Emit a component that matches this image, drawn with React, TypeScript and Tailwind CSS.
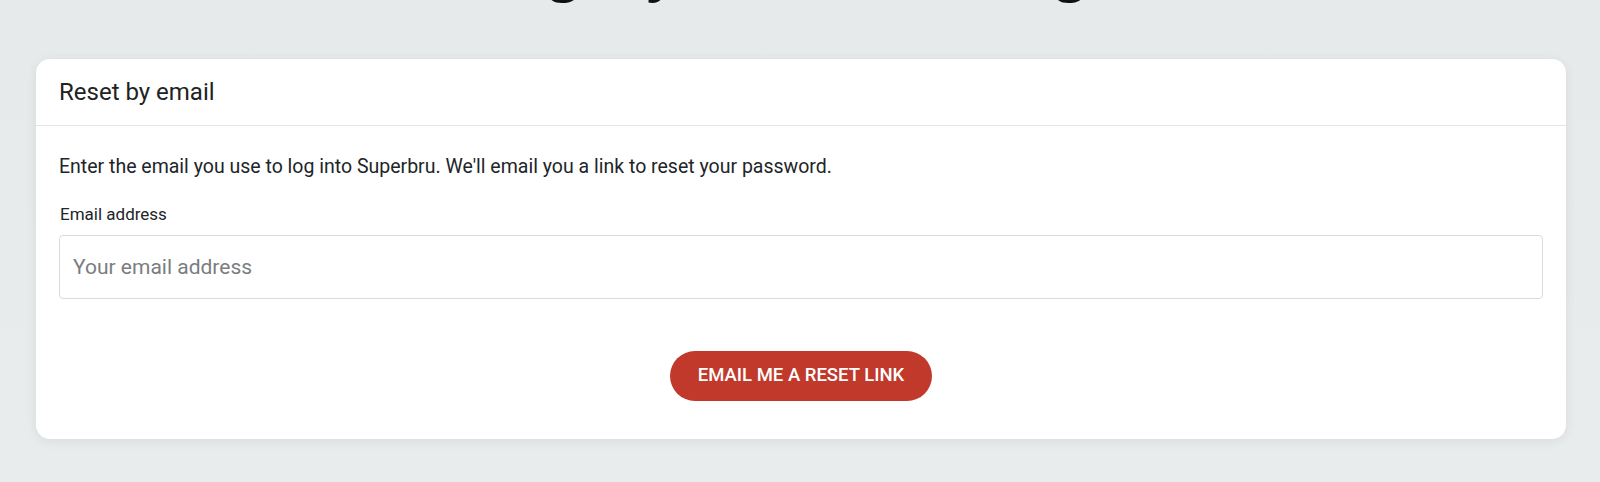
export default function App() {
  return (
    <div
      className="min-h-screen overflow-hidden bg-gradient-to-b from-[#e6eaeb] to-[#e9ecec] text-[#212529]"
      style={{ fontFamily: 'Roboto, "Liberation Sans", Arial, sans-serif' }}
    >
      <h1
        className="-mt-[56px] h-[52px] text-center text-[52px] font-bold leading-[52px] text-[#111]"
        style={{ fontFamily: '"Open Sans", Arial, sans-serif' }}
      >
        Forgot your email or login
      </h1>

      <div className="ml-[36px] mr-[34px] mt-[63px] rounded-[14px] bg-white shadow-[0_2px_12px_rgba(0,0,0,0.07)]">
        <div className="flex h-[67px] items-center border-b border-[#e3e5e6] px-[23px]">
          <h2 className="text-[24px] leading-[28px] text-[#222]">Reset by email</h2>
        </div>

        <div className="px-[23px] pb-[38px] pt-[29px]">
          <p className="text-[19.5px] leading-[24px]">
            Enter the email you use to log into Superbru. We'll email you a link to reset your password.
          </p>

          <label className="mt-[25px] block pl-[1px] text-[17px] leading-[20px]">Email address</label>
          <input
            type="email"
            placeholder="Your email address"
            className="mt-[11px] block h-[64px] w-full rounded-[4px] border border-[#d9dcde] px-[13px] text-[21px] outline-none placeholder:text-[#7a7d80]"
          />

          <div className="mt-[52px] flex justify-center">
            <button className="h-[50px] w-[262px] rounded-full bg-[#c0392b] text-[18.5px] font-medium uppercase text-white">
              Email me a reset link
            </button>
          </div>
        </div>
      </div>
    </div>
  );
}
